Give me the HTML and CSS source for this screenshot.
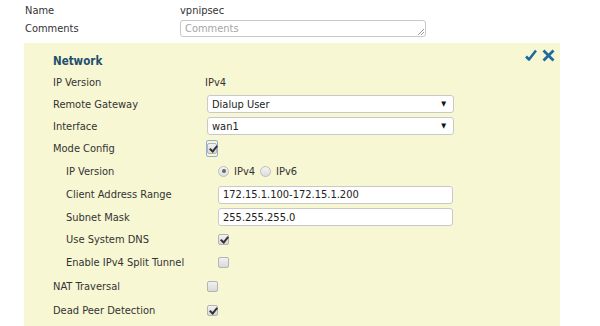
FILE: index.html
```html
<!DOCTYPE html>
<html lang="en">
<head>
  <meta charset="UTF-8">
  <title>IPsec Tunnel - vpnipsec</title>
  <link rel="stylesheet" href="styles.css">
</head>
<body>
  <div class="top">
    <div class="top-row">
      <span class="top-label">Name</span>
      <span class="value">vpnipsec</span>
    </div>
    <div class="top-row comments">
      <span class="top-label">Comments</span>
      <span class="textarea"><span class="placeholder">Comments</span><span class="grip"></span></span>
    </div>
  </div>

  <section class="panel">
    <header class="panel-head">
      <h2>Network</h2>
      <div class="actions">
        <svg width="12" height="13" viewBox="0 0 12 13" aria-label="Apply"><path d="M1 7.5 L4 10.5 L11 1.5" fill="none" stroke="#1d6aa0" stroke-width="2.6" stroke-linejoin="round"/></svg>
        <svg width="13" height="13" viewBox="0 0 13 13" aria-label="Cancel"><path d="M1.5 1.5 L11.5 11.5 M11.5 1.5 L1.5 11.5" fill="none" stroke="#1d6aa0" stroke-width="2.8"/></svg>
      </div>
    </header>

    <div class="row">
      <span class="label">IP Version</span>
      <span class="plain">IPv4</span>
    </div>
    <div class="row">
      <span class="label">Remote Gateway</span>
      <span class="select">Dialup User<span class="arrow">&#9660;</span></span>
    </div>
    <div class="row">
      <span class="label">Interface</span>
      <span class="select">wan1<span class="arrow">&#9660;</span></span>
    </div>
    <div class="row">
      <span class="label">Mode Config</span>
      <span class="focus"><span class="check on"></span></span>
    </div>

    <div class="sub">
      <div class="row tall">
        <span class="label">IP Version</span>
        <span class="radios">
          <span class="radio on"></span><span class="radio-text">IPv4</span>
          <span class="radio"></span><span class="radio-text">IPv6</span>
        </span>
      </div>
      <div class="row mid">
        <span class="label">Client Address Range</span>
        <span class="input">172.15.1.100-172.15.1.200</span>
      </div>
      <div class="row">
        <span class="label">Subnet Mask</span>
        <span class="input">255.255.255.0</span>
      </div>
      <div class="row mid">
        <span class="label">Use System DNS</span>
        <span class="check on"></span>
      </div>
      <div class="row mid">
        <span class="label">Enable IPv4 Split Tunnel</span>
        <span class="check"></span>
      </div>
    </div>

    <div class="row tall">
      <span class="label">NAT Traversal</span>
      <span class="check"></span>
    </div>
    <div class="row tall">
      <span class="label">Dead Peer Detection</span>
      <span class="check on"></span>
    </div>
  </section>
</body>
</html>
```

FILE: styles.css
```css
:root {
  --text-color: #333333;
  --panel-bg: #f7f7d4;
  --heading-color: #1f4e6e;
  --border-color: #c9c9c9;
  --font-family: 'DejaVu Sans Condensed', 'DejaVu Sans', sans-serif;
}

* {
  box-sizing: border-box;
  margin: 0;
  padding: 0;
}

body {
  font-family: var(--font-family);
  font-size: 11px;
  color: var(--text-color);
  background: #fff;
  width: 600px;
  height: 326px;
  overflow: hidden;
}

/* name + comments above the panel */
.top {
  padding: 0 0 6px 25px;
}

.top-row {
  display: flex;
  align-items: center;
  height: 20px;
}

.top-row.comments {
  height: 17px;
}

.top-label {
  width: 155px;
}

.textarea {
  position: relative;
  display: flex;
  align-items: center;
  width: 246px;
  height: 17px;
  padding-left: 4px;
  background: #fff;
  border: 1px solid var(--border-color);
  border-radius: 3px;
}

.placeholder {
  color: #a6a6a6;
}

.grip {
  position: absolute;
  right: 1px;
  bottom: 1px;
  width: 6px;
  height: 6px;
  background: linear-gradient(135deg, transparent 45%, #999 45%, #999 55%, transparent 55%, transparent 70%, #999 70%, #999 80%, transparent 80%);
}

/* network panel */
.panel {
  margin-left: 24px;
  width: 536px;
  height: 283px;
  background: var(--panel-bg);
  padding: 8px 0 0 29px;
}

.panel-head {
  display: flex;
  justify-content: space-between;
  align-items: flex-start;
  height: 20px;
  padding-right: 5px;
}

.panel-head h2 {
  font-size: 11.5px;
  font-weight: 700;
  color: var(--heading-color);
  margin-top: 3px;
}

.actions {
  display: flex;
  gap: 5px;
  margin-top: -2px;
}

.row {
  display: flex;
  align-items: center;
  height: 22px;
}

.row.mid {
  height: 23px;
}

.row.tall {
  height: 24px;
}

.label {
  width: 154px;
  flex: none;
}

.sub {
  padding-left: 13px;
}

.sub .label {
  width: 152px;
}

.plain {
  margin-left: -2px;
}

.select,
.input {
  position: relative;
  display: flex;
  align-items: center;
  height: 18px;
  background: #fff;
  border: 1px solid var(--border-color);
  border-radius: 3px;
  padding-left: 4px;
  color: #222;
}

.select {
  width: 247px;
}

.input {
  width: 235px;
}

.arrow {
  position: absolute;
  right: 7px;
  top: 4px;
  font-size: 7px;
  color: #111;
}

.check {
  position: relative;
  display: inline-block;
  width: 11px;
  height: 11px;
  border: 1px solid #b4b4b4;
  border-radius: 2px;
  background: linear-gradient(#f2f2f2, #d9d9d9);
}

.check.on::after {
  content: '';
  position: absolute;
  left: 3px;
  top: 0;
  width: 3px;
  height: 6px;
  border: solid #333;
  border-width: 0 2px 2px 0;
  transform: rotate(40deg);
}

.focus {
  display: inline-flex;
  align-items: center;
  justify-content: center;
  width: 12px;
  height: 17px;
  border: 1px solid #8fb1d9;
  border-radius: 2px;
  margin-left: -1px;
}

.focus .check {
  width: 10px;
  height: 11px;
}

.radios {
  display: flex;
  align-items: center;
}

.radio {
  position: relative;
  width: 11px;
  height: 11px;
  border: 1px solid #bdbdbd;
  border-radius: 50%;
  background: linear-gradient(#f4f4f4, #dedede);
}

.radio.on::after {
  content: '';
  position: absolute;
  left: 2.5px;
  top: 2.5px;
  width: 4px;
  height: 4px;
  border-radius: 50%;
  background: #666;
}

.radio-text {
  margin: 0 5px;
}
```
